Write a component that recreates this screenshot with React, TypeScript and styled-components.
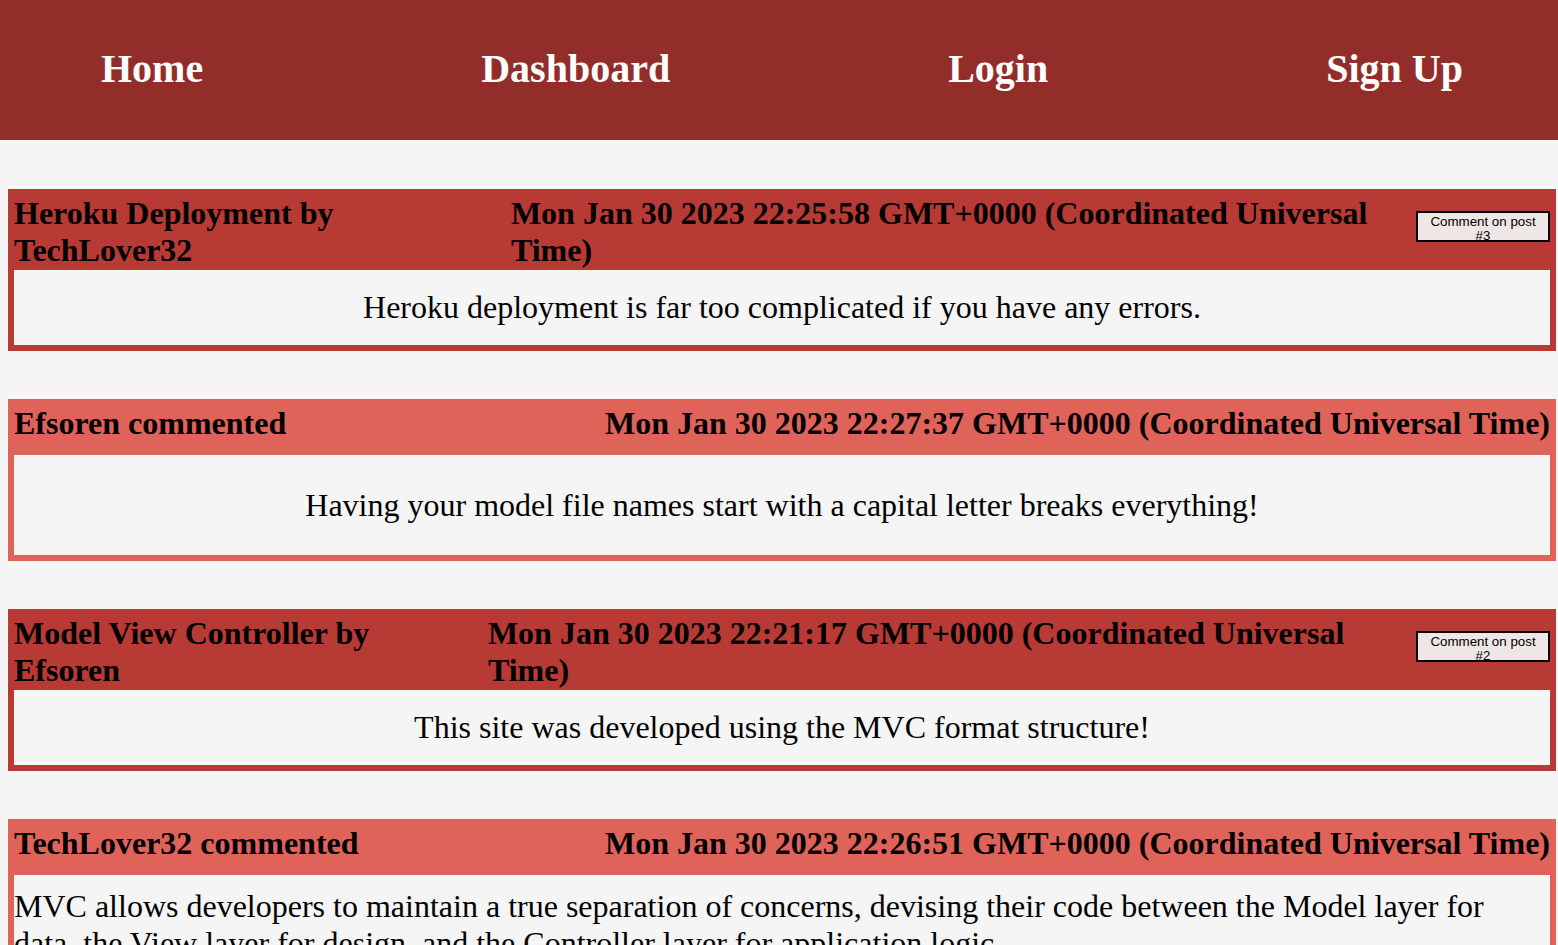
import { FC } from "react";
import styled, { createGlobalStyle } from "styled-components";

const GlobalStyle = createGlobalStyle`
  html, body {
    margin: 0;
    padding: 0;
    background: #f5f5f5;
  }
  body {
    font-family: "Liberation Serif", "Times New Roman", serif;
    color: #000;
  }
`;

const NavBar = styled.nav`
  height: 140px;
  background: #922d2a;
  display: flex;
  align-items: center;
  justify-content: space-between;
  padding: 0 95px 3px 101px;
  box-sizing: border-box;
`;

const NavLink = styled.a`
  color: #fff;
  font-size: 40px;
  font-weight: bold;
  text-decoration: none;
  cursor: pointer;
`;

const Feed = styled.main`
  display: flex;
  flex-direction: column;
  gap: 48px;
  padding: 49px 2px 48px 8px;
`;

const Card = styled.section<{ $comment?: boolean }>`
  border: 6px solid ${(p) => (p.$comment ? "#e0635a" : "#b83a34")};
  background: #f5f5f5;
`;

const CardHeader = styled.header<{ $comment?: boolean }>`
  display: flex;
  justify-content: space-between;
  align-items: flex-start;
  min-height: ${(p) => (p.$comment ? "50px" : "75px")};
  background: ${(p) => (p.$comment ? "#e0635a" : "#b83a34")};
`;

const HeaderText = styled.h2`
  margin: 0;
  font-size: 32px;
  font-weight: bold;
  color: #000;
`;

const DateText = styled(HeaderText)`
  padding-left: 13px;
`;

const CommentButton = styled.button`
  flex: 0 0 134px;
  height: 31px;
  margin-top: 16px;
  box-sizing: border-box;
  display: flex;
  align-items: flex-start;
  justify-content: center;
  text-align: center;
  padding: 2px 8px 1px;
  border: 2px solid #000;
  background: #efe6e6;
  font-family: "Liberation Sans", Arial, sans-serif;
  font-size: 13.33px;
  line-height: 14px;
  color: #000;
  cursor: pointer;
`;

const CardBody = styled.div<{ $comment?: boolean }>`
  display: flex;
  justify-content: center;
  align-items: center;
  min-height: ${(p) => (p.$comment ? "100px" : "75px")};
  font-size: 32px;
`;

interface Entry {
  kind: "post" | "comment";
  title: string;
  date: string;
  body: string;
  postId?: number;
}

const entries: Entry[] = [
  {
    kind: "post",
    title: "Heroku Deployment by TechLover32",
    date: "Mon Jan 30 2023 22:25:58 GMT+0000 (Coordinated Universal Time)",
    body: "Heroku deployment is far too complicated if you have any errors.",
    postId: 3,
  },
  {
    kind: "comment",
    title: "Efsoren commented",
    date: "Mon Jan 30 2023 22:27:37 GMT+0000 (Coordinated Universal Time)",
    body: "Having your model file names start with a capital letter breaks everything!",
  },
  {
    kind: "post",
    title: "Model View Controller by Efsoren",
    date: "Mon Jan 30 2023 22:21:17 GMT+0000 (Coordinated Universal Time)",
    body: "This site was developed using the MVC format structure!",
    postId: 2,
  },
  {
    kind: "comment",
    title: "TechLover32 commented",
    date: "Mon Jan 30 2023 22:26:51 GMT+0000 (Coordinated Universal Time)",
    body: "MVC allows developers to maintain a true separation of concerns, devising their code between the Model layer for data, the View layer for design, and the Controller layer for application logic.",
  },
];

const FeedCard: FC<{ entry: Entry }> = ({ entry }) => {
  const isComment = entry.kind === "comment";
  return (
    <Card $comment={isComment}>
      <CardHeader $comment={isComment}>
        <HeaderText>{entry.title}</HeaderText>
        {isComment ? (
          <HeaderText>{entry.date}</HeaderText>
        ) : (
          <DateText>{entry.date}</DateText>
        )}
        {!isComment && (
          <CommentButton>Comment on post #{entry.postId}</CommentButton>
        )}
      </CardHeader>
      <CardBody $comment={isComment}>
        <span>{entry.body}</span>
      </CardBody>
    </Card>
  );
};

const App: FC = () => {
  return (
    <>
      <GlobalStyle />
      <NavBar>
        <NavLink>Home</NavLink>
        <NavLink>Dashboard</NavLink>
        <NavLink>Login</NavLink>
        <NavLink>Sign Up</NavLink>
      </NavBar>
      <Feed>
        {entries.map((entry) => (
          <FeedCard key={entry.title} entry={entry} />
        ))}
      </Feed>
    </>
  );
};

export default App;
